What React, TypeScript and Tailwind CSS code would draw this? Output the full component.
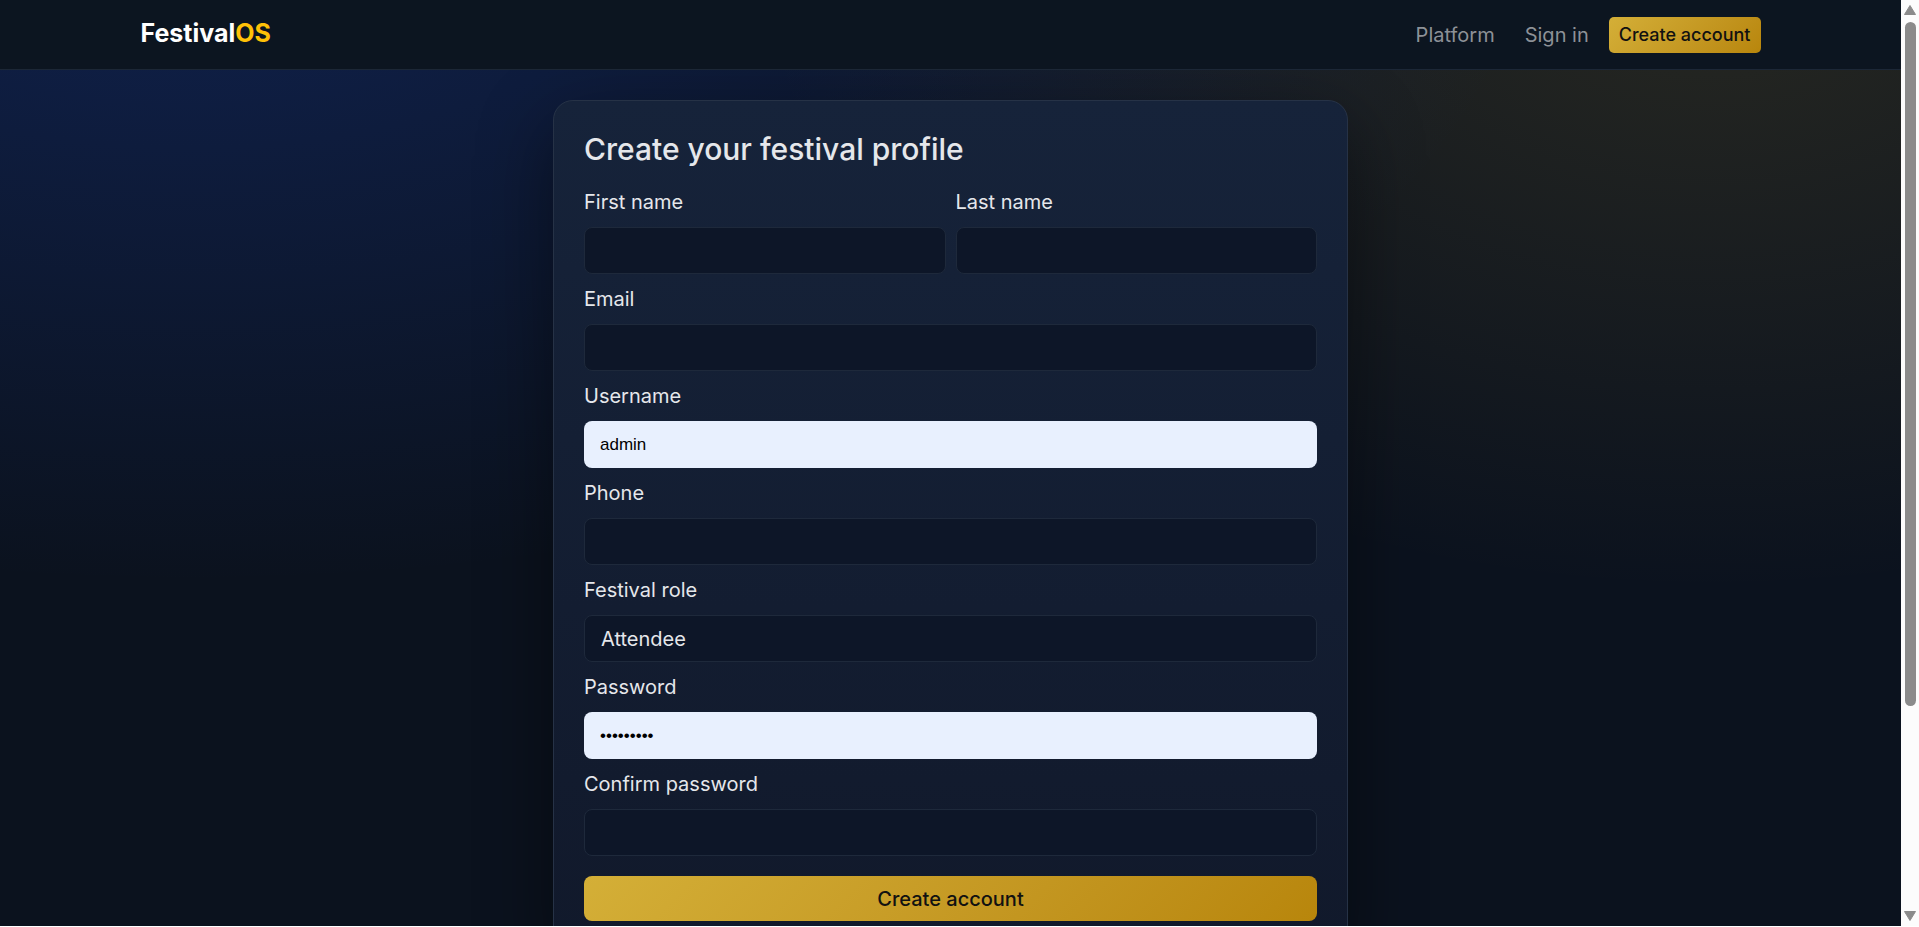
import { useState } from "react";
import type { FormEvent, InputHTMLAttributes } from "react";

const fieldBase = "block w-full h-[47px] px-4 rounded-lg outline-none focus:ring-2 focus:ring-[#d4af37]/50";
const fieldDark = "border border-[#1e293b] bg-[#0d1628] text-gray-200 text-xl";
const fieldFilled = "bg-[#e8f0fe] text-black text-[17px]";

interface FieldProps extends InputHTMLAttributes<HTMLInputElement> {
  id: string;
  label: string;
  filled?: boolean;
}

function Field({ id, label, filled = false, ...rest }: FieldProps) {
  return (
    <div>
      <label htmlFor={id} className="block mb-2.5 text-xl leading-[30px]">
        {label}
      </label>
      <input
        id={id}
        name={id}
        className={`${fieldBase} ${filled ? fieldFilled : fieldDark} font-['Liberation_Sans',sans-serif]`}
        {...rest}
      />
    </div>
  );
}

function Navbar() {
  return (
    <header className="shrink-0 h-[70px] border-b border-[#1c2736] bg-[#0c1520]">
      <nav className="max-w-[1620px] h-full mx-auto flex items-center justify-between">
        <a href="#home" className="pb-1 text-[25px] leading-9 font-bold text-white">
          Festival<span className="text-[#ffc107]">OS</span>
        </a>
        <div className="flex items-center text-xl text-[#8d9197]">
          <a href="#platform" className="px-[15px] hover:text-white">Platform</a>
          <a href="#signin" className="pl-[15px] pr-5 hover:text-white">Sign in</a>
          <a
            href="#register"
            className="h-9 px-2.5 flex items-center rounded-[5px] bg-linear-135 from-[#d4af37] to-[#b8860b] text-lg font-medium text-[#111111]"
          >
            Create account
          </a>
        </div>
      </nav>
    </header>
  );
}

function RegisterForm() {
  const [role, setRole] = useState("attendee");
  const [username, setUsername] = useState("admin");
  const [password, setPassword] = useState("festival1");

  const handleSubmit = (e: FormEvent) => {
    e.preventDefault();
  };

  return (
    <section className="max-w-[795px] mx-auto p-[30px] rounded-[20px] border border-[#263246] bg-linear-to-b from-[#16233a] to-[#11192b] shadow-[0_25px_75px_rgba(0,0,0,0.45)]">
      <h1 className="mb-5 text-3xl leading-9 font-medium">Create your festival profile</h1>

      <form onSubmit={handleSubmit} className="flex flex-col gap-2.5">
        <div className="grid grid-cols-2 gap-2.5">
          <Field id="first_name" label="First name" />
          <Field id="last_name" label="Last name" />
        </div>
        <Field id="email" label="Email" type="email" />
        <Field id="username" label="Username" filled value={username} onChange={(e) => setUsername(e.target.value)} />
        <Field id="phone" label="Phone" type="tel" />
        <div>
          <label htmlFor="role" className="block mb-2.5 text-xl leading-[30px]">
            Festival role
          </label>
          <select
            id="role"
            value={role}
            onChange={(e) => setRole(e.target.value)}
            className={`${fieldBase} ${fieldDark} appearance-none`}
          >
            <option value="attendee">Attendee</option>
          </select>
        </div>
        <Field
          id="password"
          label="Password"
          type="password"
          filled
          value={password}
          onChange={(e) => setPassword(e.target.value)}
        />
        <Field id="confirm" label="Confirm password" type="password" />
        <button
          type="submit"
          className="mt-2.5 h-[45px] w-full rounded-lg bg-linear-135 from-[#d4af37] to-[#b8860b] text-xl font-medium text-[#111111]"
        >
          Create account
        </button>
      </form>
    </section>
  );
}

function ScrollTrack() {
  return (
    <div className="w-[18px] shrink-0 flex flex-col items-center justify-between bg-[#fcfcfc] py-1" aria-hidden="true">
      <svg className="w-3.5 h-3" viewBox="0 0 14 12">
        <path d="M7 1.5 12.5 10.5H1.5Z" fill="#8b8b8b" stroke="#8b8b8b" strokeWidth="1" strokeLinejoin="round" />
      </svg>
      <div className="flex-1 w-full flex flex-col items-center pt-1.5">
        <div className="w-[11px] h-[77%] rounded-full bg-[#8b8b8b]" />
      </div>
      <svg className="w-3.5 h-3" viewBox="0 0 14 12">
        <path d="M7 10.5 12.5 1.5H1.5Z" fill="#8b8b8b" stroke="#8b8b8b" strokeWidth="1" strokeLinejoin="round" />
      </svg>
    </div>
  );
}

export default function App() {
  return (
    <div className="h-screen flex overflow-hidden bg-white pb-px font-['Inter',sans-serif] text-[#e5e7eb]">
      <div className="flex-1 min-w-0 flex flex-col overflow-hidden bg-[#0b121e] bg-[radial-gradient(1500px_750px_at_10%_-10%,rgba(29,78,216,0.26),transparent_90%),radial-gradient(1125px_750px_at_90%_-5%,rgba(212,175,55,0.14),transparent_85%)]">
        <Navbar />
        <main className="flex-1 min-h-0 overflow-hidden px-4 pt-[30px]">
          <RegisterForm />
        </main>
      </div>
      <ScrollTrack />
    </div>
  );
}
